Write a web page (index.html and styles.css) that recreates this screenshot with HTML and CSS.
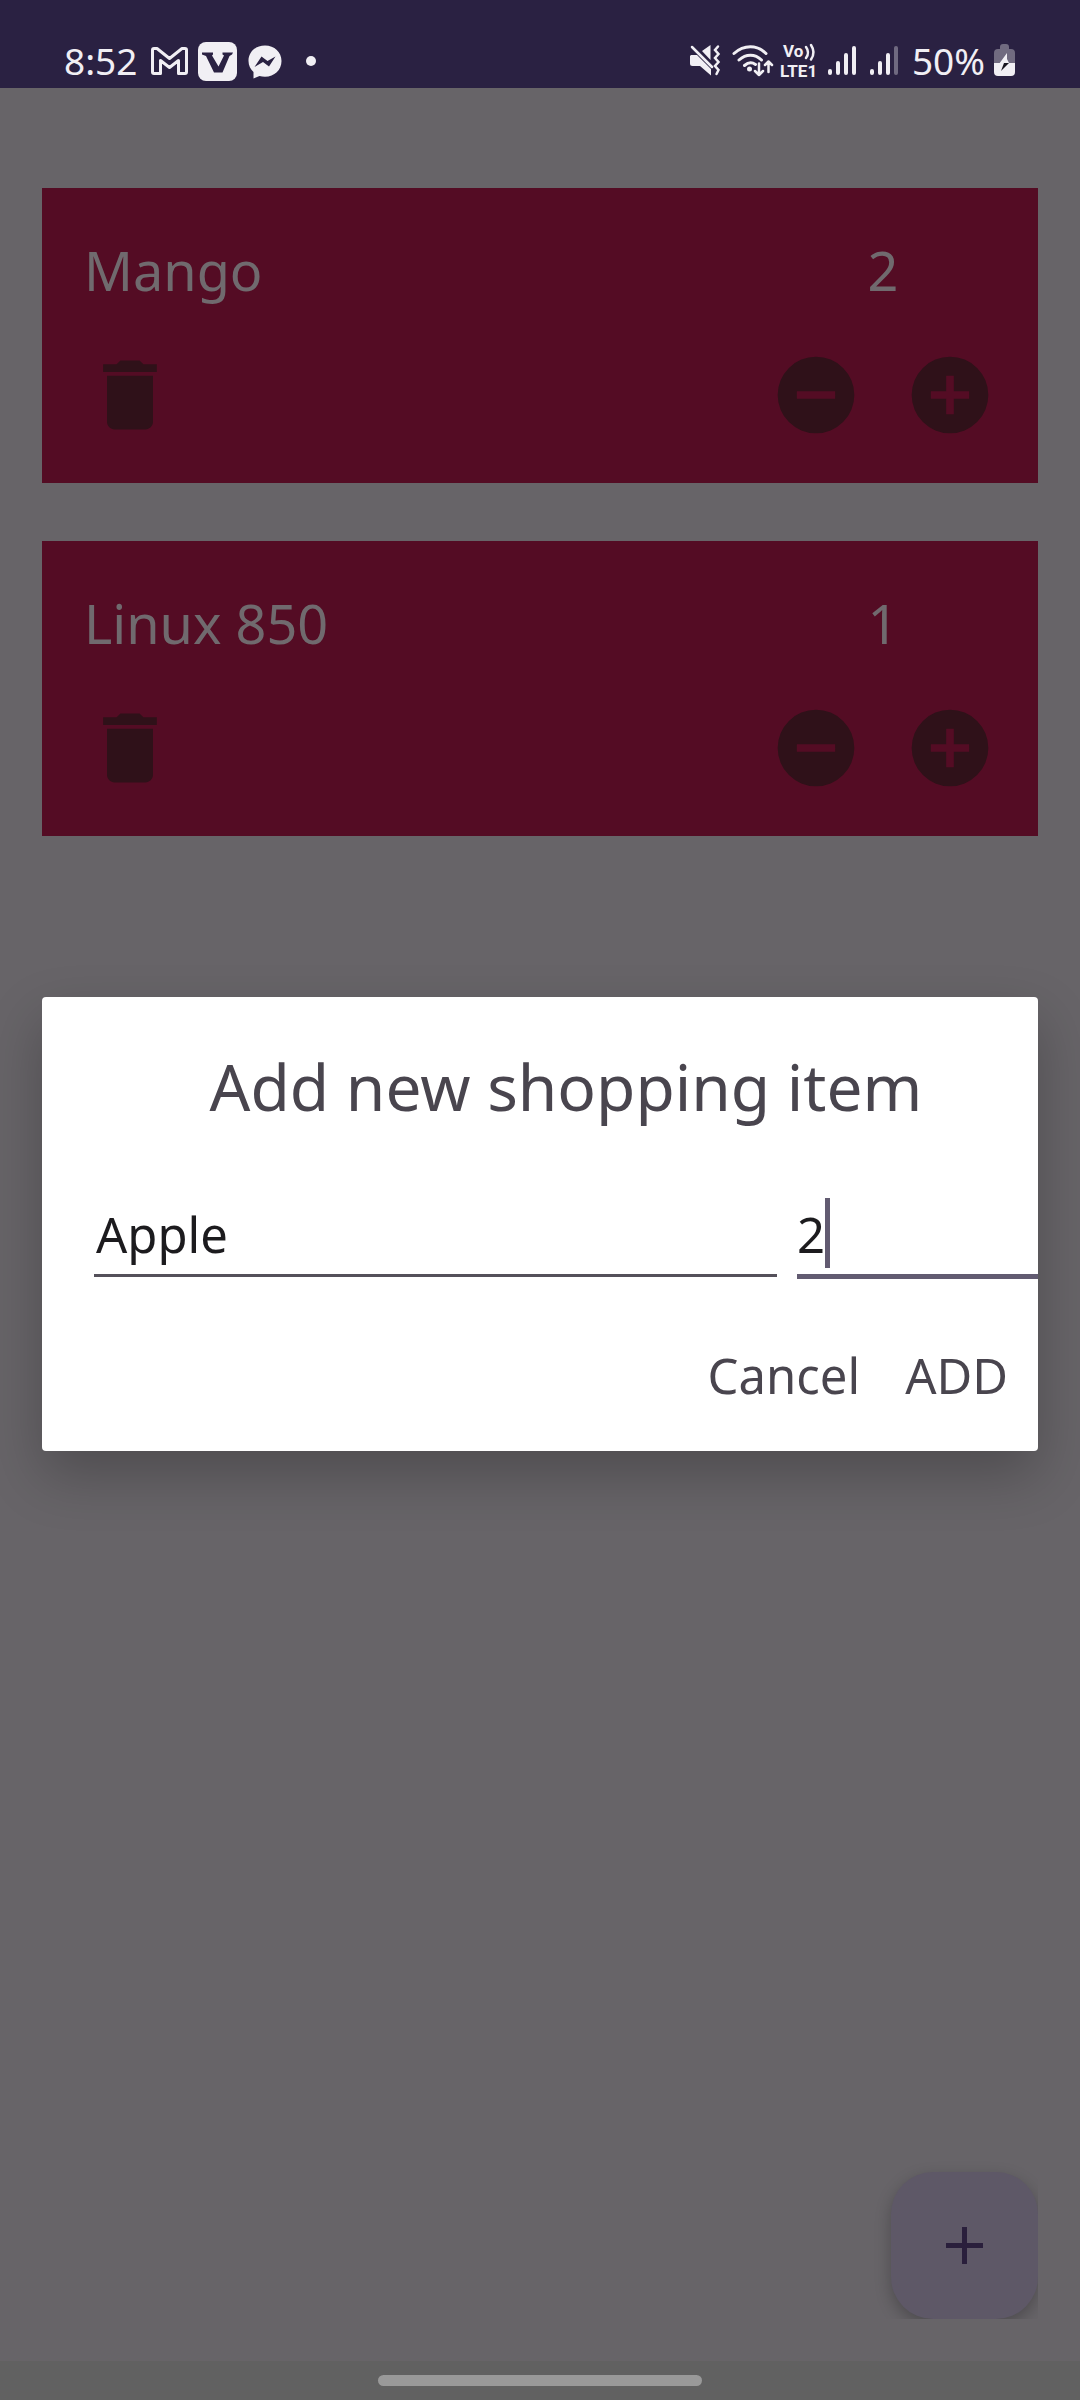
FILE: index.html
```html
<!DOCTYPE html>
<html lang="en">
<head>
<meta charset="utf-8">
<meta name="viewport" content="width=device-width, initial-scale=1">
<title>Shopping List</title>
<link rel="stylesheet" href="styles.css">
</head>
<body>
<svg class="sprite" aria-hidden="true">
  <symbol id="trash" viewBox="0 0 24 24"><path d="M6 19c0 1.100.9 2 2 2h8c1.100 0 2-.9 2-2V7H6v12zM19 4h-3.500l-1-1h-5l-1 1H5v2h14V4z"/></symbol>
  <symbol id="minus" viewBox="0 0 24 24"><path d="M12 2a10 10 0 1 0 0 20 10 10 0 0 0 0-20zm5 11H7v-2h10v2z"/></symbol>
  <symbol id="plus" viewBox="0 0 24 24"><path d="M12 2a10 10 0 1 0 0 20 10 10 0 0 0 0-20zm5 11h-4v4h-2v-4H7v-2h4V7h2v4h4v2z"/></symbol>
</svg>

<header class="status">
  <div class="status-left">
    <time>8:52</time>
    <svg width="41" height="40" viewBox="0 0 41 40" fill="none" stroke="currentColor" stroke-width="3" stroke-linejoin="round"><path d="M7 7.500h3l12.500 10 12.500-10h3a1.500 1.500 0 0 1 1.500 1.500v22a1.500 1.500 0 0 1-1.500 1.500h-6.500V19.500l-9 7-9-7v13H7A1.500 1.500 0 0 1 5.500 31V9A1.500 1.500 0 0 1 7 7.500z"/></svg>
    <svg width="39" height="39" viewBox="0 0 39 39"><rect width="39" height="39" rx="8" fill="currentColor"/><path class="cut" d="M4 10.500h11v2l-1 1 6.500 11 5.500-11-1.500-1v-2H35l-1 2-2.500 1.500-7 16.500H16L8 14l-4-1.500z"/></svg>
    <svg width="35" height="40" viewBox="0 0 35 40"><path fill="currentColor" d="M18 4.500C8.500 4.500 1.500 11 1.500 20c0 4.500 2 8.500 5 11v6.500l6-2.500c1.700.5 3.500.7 5.500.7C27.500 35.700 34.500 29 34.500 20S27.500 4.500 18 4.500z"/><path class="cut" d="M7.500 26l7-10.500 6 4.500 8-4.500-6.500 10-6-4.500z"/></svg>
    <svg width="28" height="40" viewBox="0 0 28 40"><circle cx="19" cy="20" r="5" fill="currentColor"/></svg>
  </div>
  <div class="status-right">
    <svg width="36" height="40" viewBox="0 0 36 40"><path fill="currentColor" d="M3 14h6l14 14v6.500L12 25H4.500Q2 25 2 22.500V15zM14 10l8.500-6v15z"/><path fill="none" stroke="currentColor" stroke-width="2.500" stroke-linecap="round" d="M4 6l20 20M30 5.500l-3 3.500 3.500 4-3.500 4 3.500 4-3.500 4 3.500 4-2 4"/></svg>
    <svg width="44" height="40" viewBox="0 0 44 40" fill="none" stroke="currentColor" stroke-width="3" stroke-linecap="round"><path d="M4 12.500c10-9 23-9 32 0M9 19c7-6.500 16-6.500 22.500 0M14.500 24.500c4-3.500 7.500-3.500 11-1"/><circle cx="19.500" cy="28" r="2.500" fill="currentColor" stroke="none"/><g stroke-width="2.500" stroke-linejoin="round"><path d="M29 22.500V34M25 30l4 4 4-4M38.500 31V20.500M35 24l3.500-3.500L42 24"/></g></svg>
    <svg class="volte" width="40" height="40" viewBox="0 0 40 40" role="img" aria-label="VoLTE 1"><text x="3" y="16">Vo</text><text x="0" y="36">LTE1</text><path d="M26 6q4 5.500 0 11M31 4q5 7.500 0 14.500" fill="none" stroke="currentColor" stroke-width="2.500" stroke-linecap="round"/></svg>
    <svg width="32" height="40" viewBox="0 0 32 40" stroke="currentColor" stroke-width="4" stroke-linecap="round"><path d="M4 30v2M12 22v10M20 14v18M28 7v25"/></svg>
    <svg width="38" height="40" viewBox="0 0 38 40" stroke="currentColor" stroke-width="4" stroke-linecap="round"><path d="M8 30v2M16 22v10M24 14v18"/><path d="M32 7v25" opacity=".35"/></svg>
    <span class="battery-level">50%</span>
    <svg width="23" height="40" viewBox="0 0 23 40"><path fill="#716b80" d="M7 6q0-3 3-3h3q3 0 3 3v2h2q4 0 4 4v10H1V12q0-4 4-4h2z"/><path fill="currentColor" d="M1 22h21v9q0 4-4 4H5q-4 0-4-4z"/><path fill="currentColor" d="M14 12l-8 11h5.500l1-1h3.500l-2-4z"/><path fill="#18151f" d="M11 22h5l-8 8z"/></svg>
  </div>
</header>

<main>
  <article class="item">
    <h2>Mango</h2><output class="count">2</output>
    <div class="tools"><button class="icon" aria-label="Delete Mango"><svg><use href="#trash"/></svg></button></div>
    <div class="steps"><button class="icon" aria-label="Decrease Mango"><svg><use href="#minus"/></svg></button><button class="icon" aria-label="Increase Mango"><svg><use href="#plus"/></svg></button></div>
  </article>
  <article class="item">
    <h2>Linux 850</h2><output class="count">1</output>
    <div class="tools"><button class="icon" aria-label="Delete Linux 850"><svg><use href="#trash"/></svg></button></div>
    <div class="steps"><button class="icon" aria-label="Decrease Linux 850"><svg><use href="#minus"/></svg></button><button class="icon" aria-label="Increase Linux 850"><svg><use href="#plus"/></svg></button></div>
  </article>
  <div class="fab-area">
    <button class="fab" aria-label="Add item"><svg viewBox="0 0 37 37"><path d="M16 0h5v16h16v5H21v16h-5V21H0v-5h16z"/></svg></button>
  </div>
</main>

<div class="overlay">
  <form class="sheet" role="dialog" aria-labelledby="sheet-title">
    <h1 id="sheet-title">Add new shopping item</h1>
    <div class="fields">
      <div class="field"><input type="text" value="Apple" aria-label="Item name"></div>
      <div class="field active"><input type="text" inputmode="numeric" value="2" aria-label="Amount"><span class="caret"></span></div>
    </div>
    <div class="actions"><button type="button">Cancel</button><button type="button">ADD</button></div>
  </form>
</div>

<footer class="nav"><div class="handle"></div></footer>
</body>
</html>
```
FILE: styles.css
```css
* { box-sizing: border-box; }

body {
  margin: 0;
  min-height: 100vh;
  position: relative;
  display: flex;
  flex-direction: column;
  background: #676468;
  font-family: "Noto Sans", "Open Sans", sans-serif;
}

h1, h2 { margin: 0; font-weight: 400; }

button, input {
  border: 0;
  padding: 0;
  background: none;
  color: inherit;
  font: inherit;
}

svg { display: block; flex: none; }

.sprite { position: absolute; width: 0; height: 0; }

.status {
  height: 88px;
  padding: 34px 64px 0;
  display: flex;
  justify-content: space-between;
  background: #2a2142;
  color: #f1eff4;
  font-size: 37px;
  line-height: 54px;
}

.status-left, .status-right { display: flex; align-items: center; }
.status-left { gap: 10px; }
.status-right { gap: 6px; }
.cut { fill: #2a2142; }
.volte text { font-family: Roboto, sans-serif; font-size: 17px; font-weight: 700; fill: currentColor; }
.battery-level { padding: 0 2px 0 4px; }

main {
  flex: 1;
  padding: 100px 42px 42px;
  display: flex;
  flex-direction: column;
  gap: 58px;
}

.item {
  padding: 41px 42px 42px;
  display: grid;
  grid-template-columns: 1fr auto;
  row-gap: 38px;
  background: #540c24;
  color: #706a6e;
  font-size: 54px;
  line-height: 82px;
}

.item h2 { font-size: inherit; }
.count { text-align: center; }
.steps { display: flex; gap: 42px; }

.icon { display: block; color: #2f1119; }
.icon svg { width: 92px; height: 92px; fill: currentColor; }

.fab-area {
  margin-top: auto;
  align-self: flex-end;
  padding: 30px 0 0 30px;
  overflow: hidden;
}

.fab {
  width: 147px;
  height: 147px;
  display: grid;
  place-items: center;
  border-radius: 42px;
  background: #5e5867;
  box-shadow: 0 6px 16px rgba(0, 0, 0, .25);
}

.fab svg { width: 37px; height: 37px; fill: #2a1f3c; }

.overlay {
  position: absolute;
  inset: 88px 0 40px;
  padding: 0 42px;
  display: flex;
  align-items: center;
}

.sheet {
  flex: 1;
  padding: 48px 0 44px 52px;
  border-radius: 4px;
  overflow: hidden;
  background: #fff;
  color: #49454e;
  font-size: 49px;
  box-shadow: 0 24px 56px rgba(0, 0, 0, .24);
}

.sheet h1 {
  font-size: 64px;
  line-height: 84px;
  text-align: center;
}

.fields {
  margin: 66px 0 64px;
  display: grid;
  grid-template-columns: 17fr 6fr;
  column-gap: 20px;
  align-items: start;
  color: #1c1b1e;
}

.field { position: relative; border-bottom: 3px solid #54505a; }
.field.active { border-bottom: 5px solid #625b71; }

.field input {
  display: block;
  width: 100%;
  height: 79px;
  padding: 0 2px 2px;
  outline: 0;
}

.field.active input { padding-left: 0; }

.caret {
  position: absolute;
  left: 1ch;
  top: 3px;
  width: 5px;
  height: 70px;
  background: #625b71;
}

.actions {
  padding-right: 30px;
  display: flex;
  justify-content: flex-end;
  gap: 45px;
  line-height: 64px;
}

.nav {
  height: 39px;
  padding-top: 14px;
  background: #616161;
}

.handle {
  width: 30%;
  height: 11px;
  margin: 0 auto;
  border-radius: 6px;
  background: #999;
}
```
